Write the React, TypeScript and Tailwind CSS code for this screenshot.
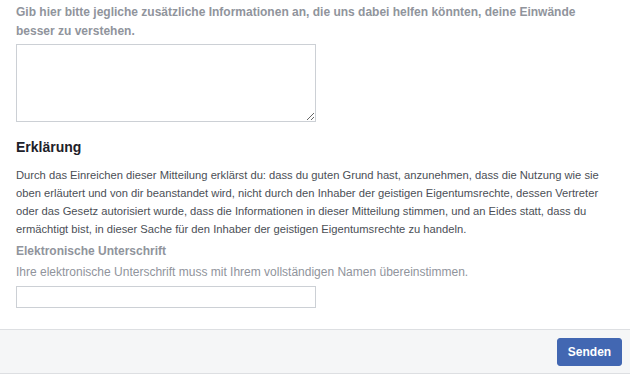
import React from 'react';

const App: React.FC = () => {
  return (
    <div className="w-[630px] h-[375px] overflow-hidden bg-white font-['Liberation_Sans',Arial,sans-serif]">
      <div className="px-4 pt-[3px]">
        {/* Zusätzliche Informationen */}
        <p className="text-[12px] leading-[19px] font-bold text-[#90949c]">
          Gib hier bitte jegliche zusätzliche Informationen an, die uns dabei helfen könnten, deine Einwände
          <br />
          besser zu verstehen.
        </p>
        <textarea className="mt-[3px] block w-[300px] h-[78px] border border-[#ccd0d5] bg-white px-1 py-1 text-[12px] outline-none" />

        {/* Erklärung */}
        <h3 className="mt-4 text-[14px] leading-[18px] font-bold text-[#1d2129]">Erklärung</h3>
        <p className="mt-[10px] whitespace-nowrap text-[11.2px] leading-[18px] text-[#4b4f56]">
          Durch das Einreichen dieser Mitteilung erklärst du: dass du guten Grund hast, anzunehmen, dass die Nutzung wie sie
          <br />
          oben erläutert und von dir beanstandet wird, nicht durch den Inhaber der geistigen Eigentumsrechte, dessen Vertreter
          <br />
          oder das Gesetz autorisiert wurde, dass die Informationen in dieser Mitteilung stimmen, und an Eides statt, dass du
          <br />
          ermächtigt bist, in dieser Sache für den Inhaber der geistigen Eigentumsrechte zu handeln.
        </p>

        {/* Unterschrift */}
        <label className="mt-[5px] block text-[12px] leading-[16px] font-bold text-[#90949c]">
          Elektronische Unterschrift
        </label>
        <p className="mt-[5px] text-[12px] leading-[16px] text-[#90949c]">
          Ihre elektronische Unterschrift muss mit Ihrem vollständigen Namen übereinstimmen.
        </p>
        <input
          type="text"
          className="mt-[6px] block w-[300px] h-[22px] border border-[#ccd0d5] bg-white px-1 text-[12px] outline-none"
        />
      </div>

      {/* Footer */}
      <div className="mt-[21px] h-[45px] border-y border-[#dddfe2] bg-[#f5f6f7] flex items-center justify-end pr-2">
        <button className="w-[65px] h-[28px] rounded-[3px] bg-[#4267b2] border border-[#4267b2] text-white text-[12px] font-bold">
          Senden
        </button>
      </div>
    </div>
  );
};

export default App;
